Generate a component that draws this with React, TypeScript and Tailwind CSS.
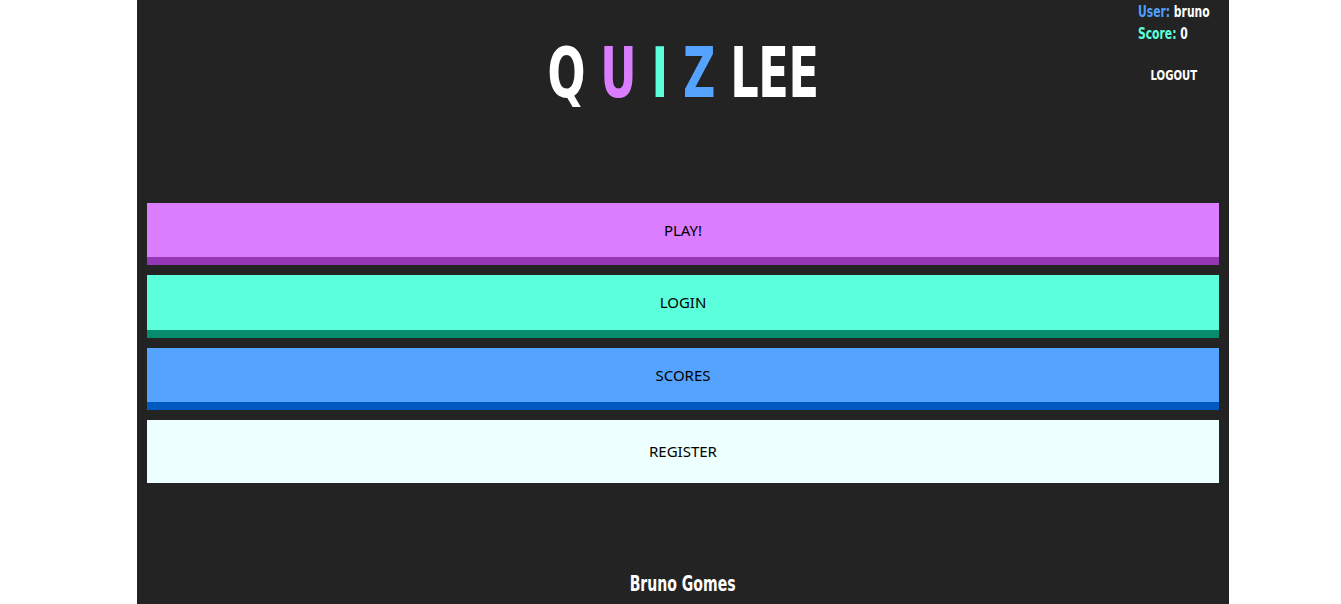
import React from 'react';

// no narrow font in the sandbox, so the condensed face gets squeezed a bit
const condensed = "font-['Liberation_Sans_Narrow','DejaVu_Sans_Condensed',sans-serif] font-bold";

interface MenuButtonProps {
  label: string;
  className: string;
}

const MenuButton: React.FC<MenuButtonProps> = ({ label, className }) => (
  <button
    className={`w-full h-[62.4px] flex items-center justify-center text-[15px] text-black font-['Noto_Sans',sans-serif] ${className}`}
  >
    {label}
  </button>
);

export default function App() {
  return (
    <div className="min-h-screen bg-white">
      <div className="ml-[137px] w-[1092px] h-[604px] bg-[#232323] flex flex-col px-[10px]">
        <header className="grid grid-cols-[1fr_auto_1fr] h-[203px]">
          <div />
          <h1
            className={`${condensed} text-[70px] leading-none pt-[38px] tracking-[-0.5px] text-white scale-x-[0.71] origin-center`}
          >
            Q <span className="text-[#da7eff]">U</span> <span className="text-[#5bffdb]">I</span>{' '}
            <span className="text-[#54a4ff]">Z</span> LEE
          </h1>
          <div className="flex justify-end pr-[9px]">
            <div
              className={`${condensed} flex flex-col items-center text-[15px] leading-[22px] pt-[1px] scale-x-[0.8] origin-top-right`}
            >
              <div className="self-start">
                <span className="text-[#4d9fff]">User:</span> <span className="text-white">bruno</span>
              </div>
              <div className="self-start">
                <span className="text-[#5bffdb]">Score:</span> <span className="text-white">0</span>
              </div>
              <button className="mt-[19px] text-white text-[14px]">LOGOUT</button>
            </div>
          </div>
        </header>

        <main className="flex flex-col gap-[10px]">
          <MenuButton label="PLAY!" className="bg-[#da7eff] border-b-8 border-[#9537b5]" />
          <MenuButton label="LOGIN" className="bg-[#5bffdb] border-b-8 border-[#088c6e]" />
          <MenuButton label="SCORES" className="bg-[#54a4ff] border-b-8 border-[#0059c1]" />
          <MenuButton label="REGISTER" className="bg-[#edffff]" />
        </main>

        <footer className="mt-auto pb-[4px] text-center">
          <span className={`${condensed} inline-block text-white text-[22px] scale-x-[0.71]`}>Bruno Gomes</span>
        </footer>
      </div>
    </div>
  );
}
